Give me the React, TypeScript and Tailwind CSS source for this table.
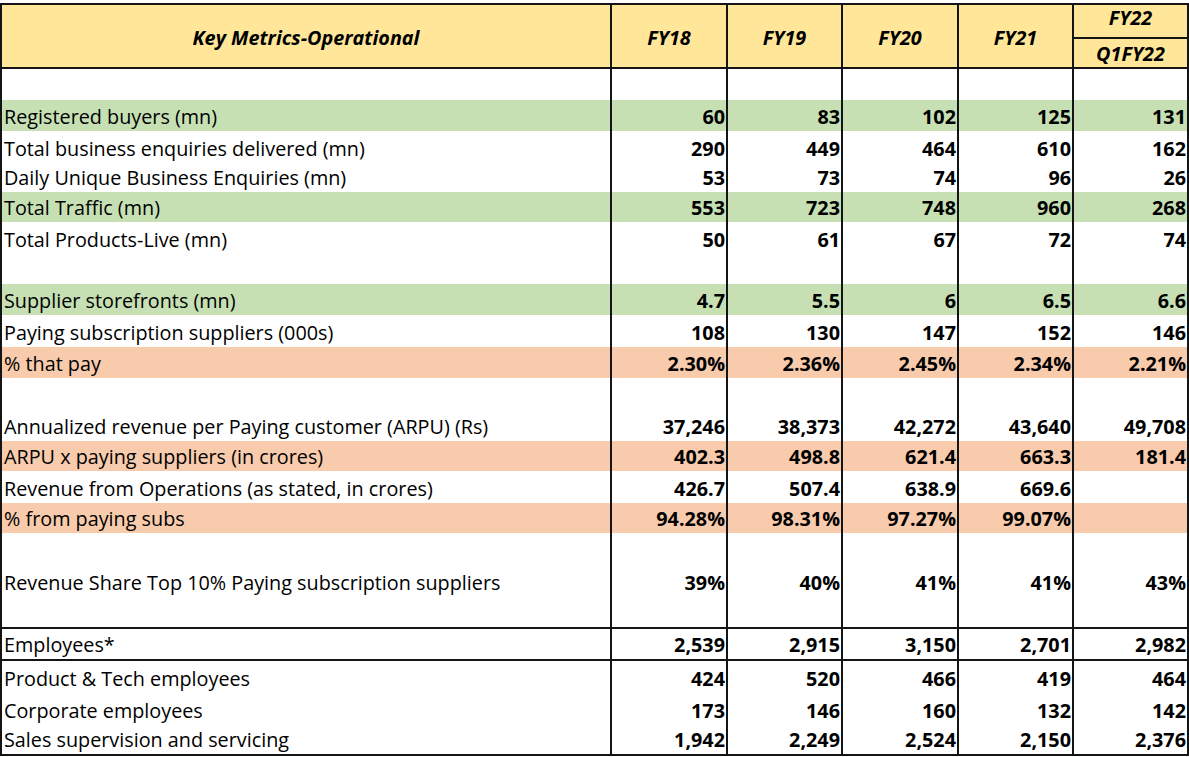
type Fill = 'green' | 'orange' | 'none'

interface MetricRow {
  label: string
  values: string[]
  height: string
  fill: Fill
  lineBelow?: boolean
  middle?: boolean
}

const rows: MetricRow[] = [
  { label: '', values: [], height: 'h-[31px]', fill: 'none' },
  { label: 'Registered buyers (mn)', values: ['60', '83', '102', '125', '131'], height: 'h-[31px]', fill: 'green' },
  { label: 'Total business enquiries delivered (mn)', values: ['290', '449', '464', '610', '162'], height: 'h-[32px]', fill: 'none' },
  { label: 'Daily Unique Business Enquiries (mn)', values: ['53', '73', '74', '96', '26'], height: 'h-[29px]', fill: 'none' },
  { label: 'Total Traffic (mn)', values: ['553', '723', '748', '960', '268'], height: 'h-[30px]', fill: 'green' },
  { label: 'Total Products-Live (mn)', values: ['50', '61', '67', '72', '74'], height: 'h-[32px]', fill: 'none' },
  { label: '', values: [], height: 'h-[30px]', fill: 'none' },
  { label: 'Supplier storefronts (mn)', values: ['4.7', '5.5', '6', '6.5', '6.6'], height: 'h-[31px]', fill: 'green' },
  { label: 'Paying subscription suppliers (000s)', values: ['108', '130', '147', '152', '146'], height: 'h-[32px]', fill: 'none' },
  { label: '% that pay', values: ['2.30%', '2.36%', '2.45%', '2.34%', '2.21%'], height: 'h-[31px]', fill: 'orange' },
  { label: '', values: [], height: 'h-[32px]', fill: 'none' },
  { label: 'Annualized revenue per Paying customer (ARPU) (Rs)', values: ['37,246', '38,373', '42,272', '43,640', '49,708'], height: 'h-[31px]', fill: 'none' },
  { label: 'ARPU x paying suppliers (in crores)', values: ['402.3', '498.8', '621.4', '663.3', '181.4'], height: 'h-[30px]', fill: 'orange' },
  { label: 'Revenue from Operations (as stated, in crores)', values: ['426.7', '507.4', '638.9', '669.6', ''], height: 'h-[32px]', fill: 'none' },
  { label: '% from paying subs', values: ['94.28%', '98.31%', '97.27%', '99.07%', ''], height: 'h-[30px]', fill: 'orange' },
  { label: 'Revenue Share Top 10% Paying subscription suppliers', values: ['39%', '40%', '41%', '41%', '43%'], height: 'h-[96px]', fill: 'none', lineBelow: true, middle: true },
  { label: 'Employees*', values: ['2,539', '2,915', '3,150', '2,701', '2,982'], height: 'h-[32px]', fill: 'none', lineBelow: true },
  { label: 'Product & Tech employees', values: ['424', '520', '466', '419', '464'], height: 'h-[32px]', fill: 'none' },
  { label: 'Corporate employees', values: ['173', '146', '160', '132', '142'], height: 'h-[32px]', fill: 'none' },
  { label: 'Sales supervision and servicing', values: ['1,942', '2,249', '2,524', '2,150', '2,376'], height: 'h-[31px]', fill: 'none', lineBelow: true },
]

const fillClass: Record<Fill, string> = {
  green: 'bg-[#c6e0b4]',
  orange: 'bg-[#f8cbad]',
  none: 'bg-white',
}

const years = ['FY18', 'FY19', 'FY20', 'FY21']

const gridCols = 'grid grid-cols-[610px_116px_115px_116px_115px_115px]'

function DataRow({ row }: { row: MetricRow }) {
  const align = row.middle ? 'items-center pt-[4px]' : 'items-end pb-[1px]'
  return (
    <div
      className={`${gridCols} ${row.height} ${fillClass[row.fill]} ${
        row.lineBelow ? 'border-b-2 border-[#141414]' : ''
      }`}
    >
      <div className={`flex ${align} pl-[2px] border-r-2 border-[#141414] whitespace-nowrap`}>
        {row.label}
      </div>
      {[0, 1, 2, 3, 4].map((i) => (
        <div
          key={i}
          className={`flex ${align} justify-end pr-[1px] border-r-2 border-[#141414] font-bold`}
        >
          {row.values[i] ?? ''}
        </div>
      ))}
    </div>
  )
}

export default function App() {
  return (
    <div className="w-[1189px] h-[757px] bg-white overflow-hidden pt-[3px] font-['Open_Sans'] text-[19.8px] leading-[27px] text-black">
      <div className="border-l-2 border-t-2 border-[#141414]">
        {/* Header */}
        <div className={`${gridCols} h-[64px] bg-[#ffe699] border-b-2 border-[#141414] font-bold italic`}>
          <div className="flex items-center justify-center border-r-2 border-[#141414] pt-[2px]">
            Key Metrics-Operational
          </div>
          {years.map((y) => (
            <div
              key={y}
              className="flex items-center justify-center border-r-2 border-[#141414] pt-[2px]"
            >
              {y}
            </div>
          ))}
          <div className="flex flex-col border-r-2 border-[#141414]">
            <div className="h-[34px] flex items-center justify-center border-b-2 border-[#141414] pb-[8px]">
              FY22
            </div>
            <div className="flex-1 flex items-center justify-center pt-[1px]">Q1FY22</div>
          </div>
        </div>

        {rows.map((row, i) => (
          <DataRow key={i} row={row} />
        ))}
      </div>
    </div>
  )
}
